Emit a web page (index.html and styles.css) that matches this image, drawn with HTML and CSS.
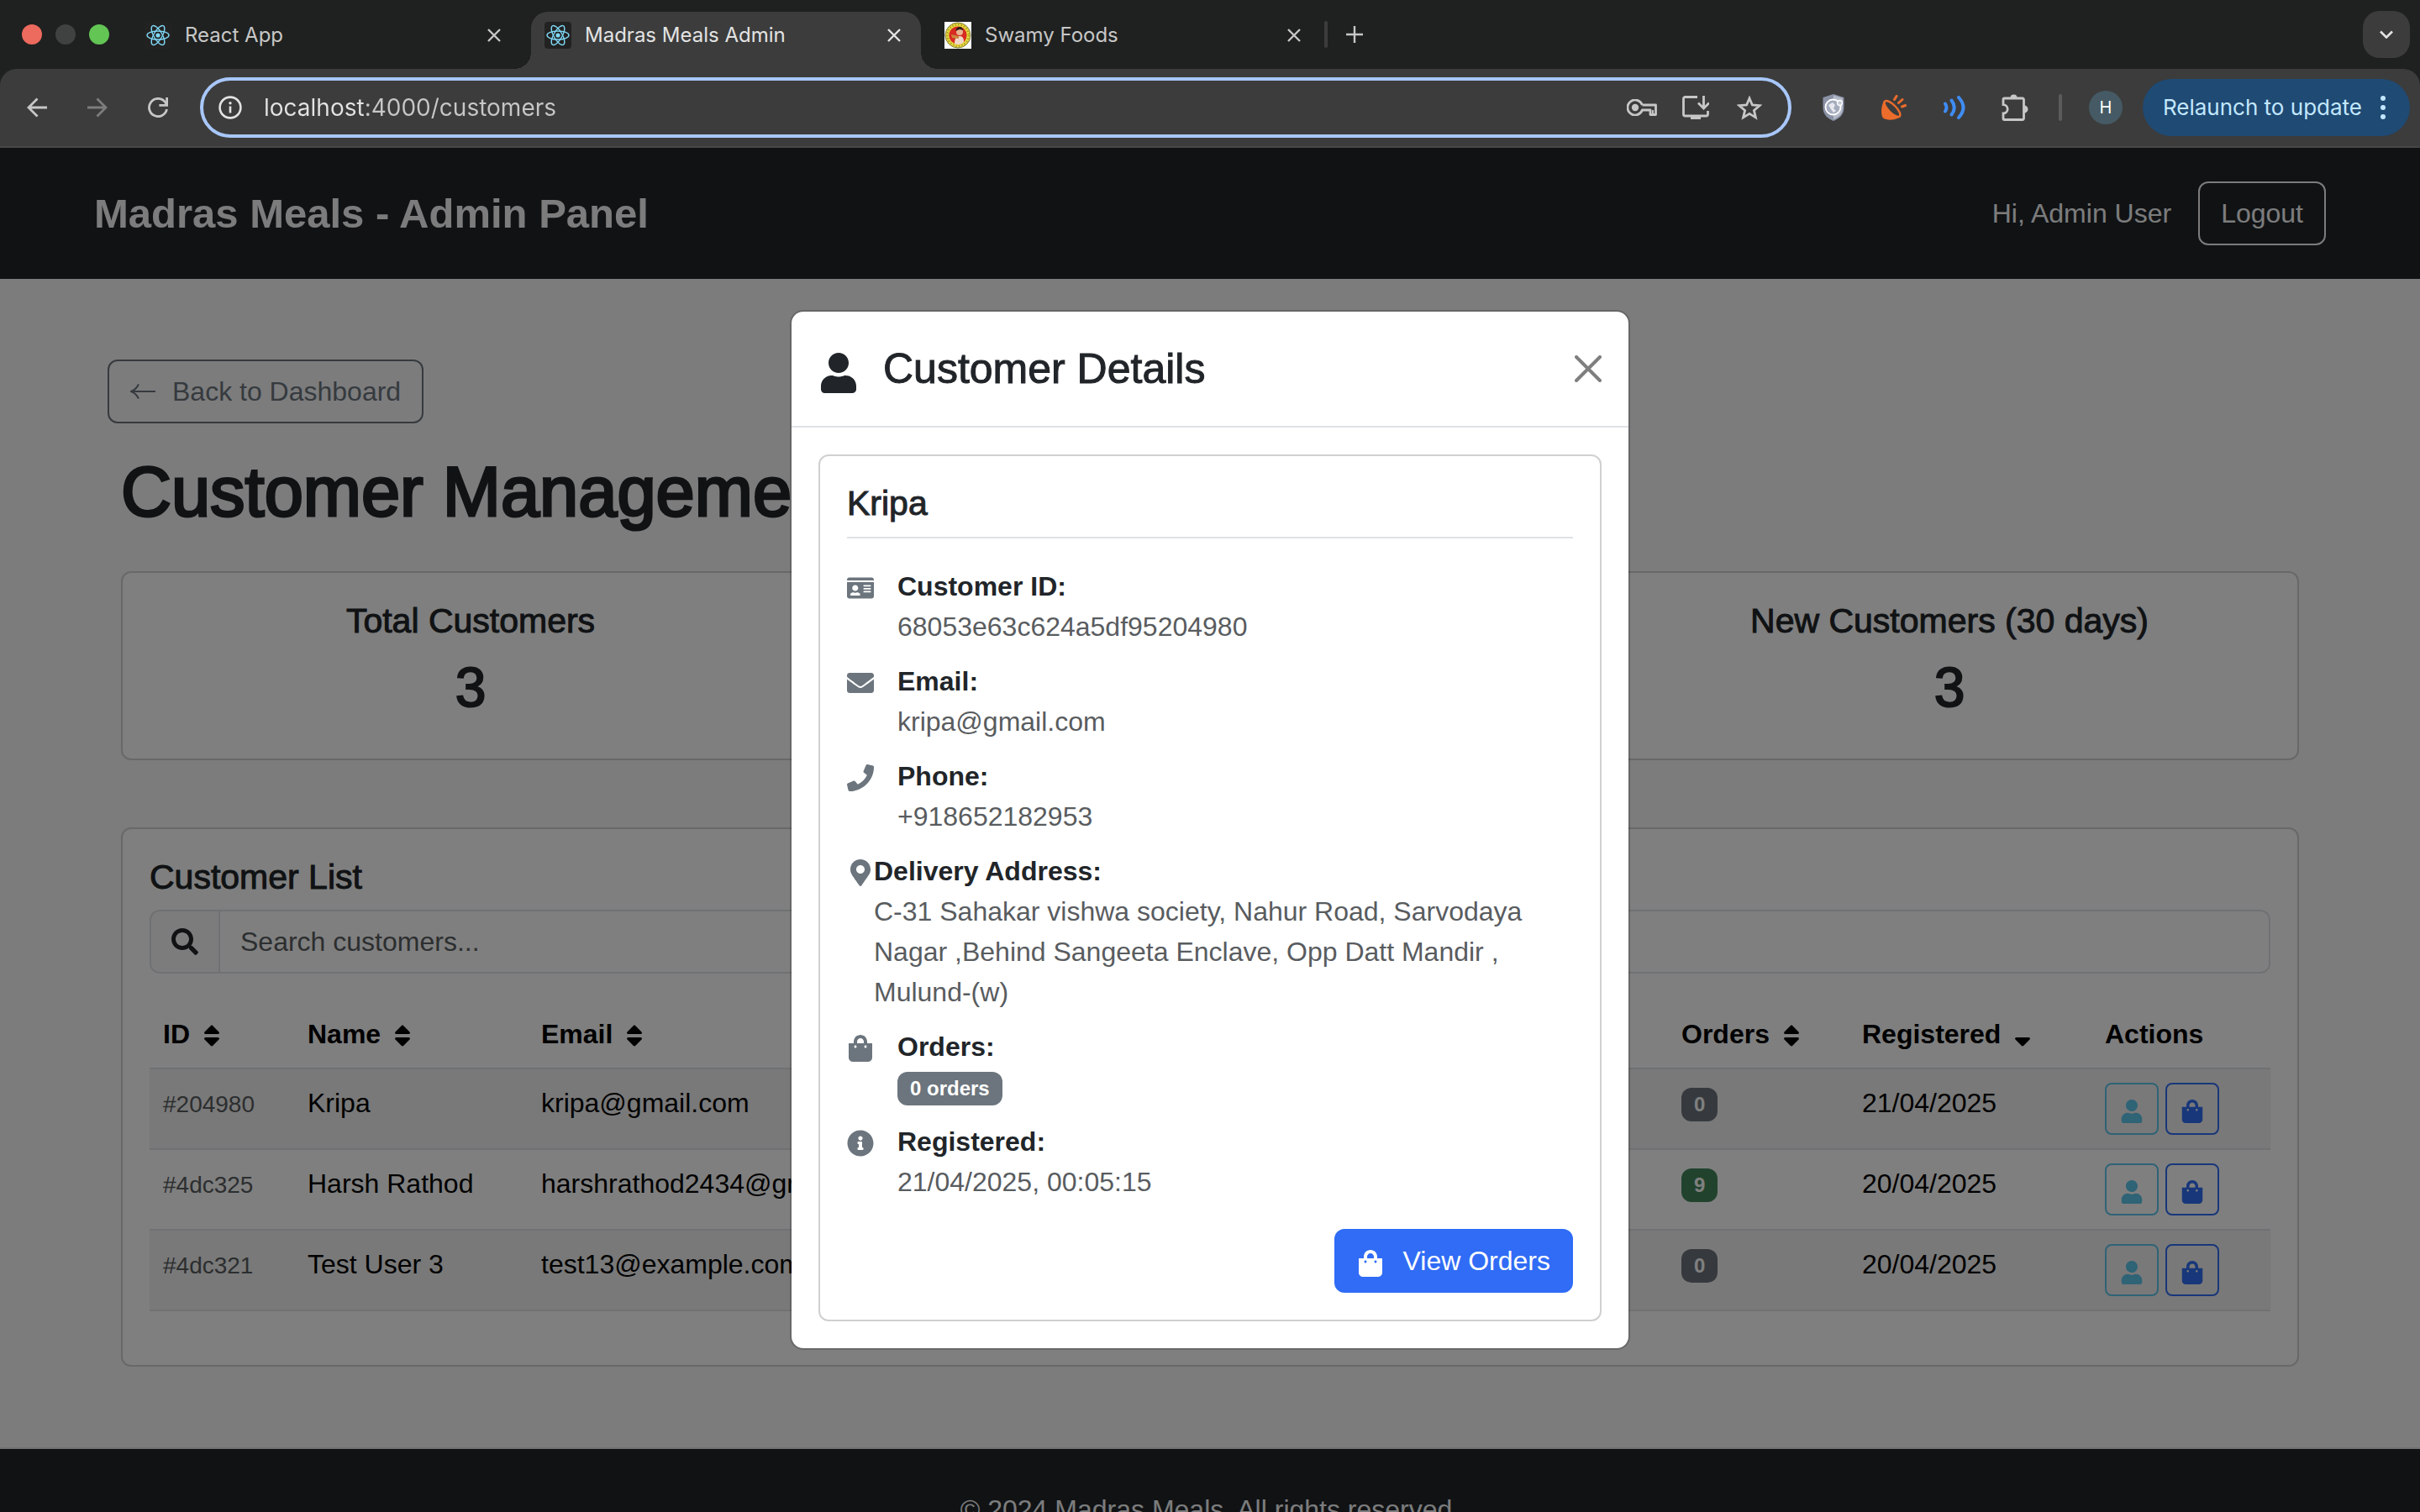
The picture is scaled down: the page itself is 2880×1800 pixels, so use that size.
FILE: index.html
```html
<!DOCTYPE html>
<html lang="en">
<head>
<meta charset="utf-8">
<title>Madras Meals Admin</title>
<link rel="stylesheet" href="styles.css">
</head>
<body>
<svg class="sprite" aria-hidden="true">
  <symbol id="react" viewBox="0 0 32 32"><g fill="none" stroke="#7fd8f5" stroke-width="1.4"><ellipse cx="16" cy="16" rx="13" ry="5"/><ellipse cx="16" cy="16" rx="13" ry="5" transform="rotate(60 16 16)"/><ellipse cx="16" cy="16" rx="13" ry="5" transform="rotate(120 16 16)"/></g><circle cx="16" cy="16" r="2.6" fill="#7fd8f5"/></symbol>
  <symbol id="close" viewBox="0 0 16 16"><path d="M1 1l14 14M15 1L1 15" fill="none" stroke="currentColor" stroke-width="2.4"/></symbol>
  <symbol id="user" viewBox="0 0 448 512"><path fill="currentColor" d="M224 256c70.7 0 128-57.3 128-128S294.7 0 224 0 96 57.3 96 128s57.3 128 128 128zm89.6 32h-16.7c-22.2 10.2-46.9 16-72.9 16s-50.6-5.8-72.9-16h-16.7C60.2 288 0 348.2 0 422.4V464c0 26.5 21.5 48 48 48h352c26.5 0 48-21.5 48-48v-41.6c0-74.2-60.2-134.4-134.4-134.4z"/></symbol>
  <symbol id="bag" viewBox="0 0 448 512"><path fill="currentColor" d="M352 160v-32C352 57.42 294.579 0 224 0 153.42 0 96 57.42 96 128v32H0v272c0 44.183 35.817 80 80 80h288c44.183 0 80-35.817 80-80V160h-96zm-192-32c0-35.29 28.71-64 64-64s64 28.71 64 64v32H160v-32zm160 120c-13.255 0-24-10.745-24-24s10.745-24 24-24 24 10.745 24 24-10.745 24-24 24zm-192 0c-13.255 0-24-10.745-24-24s10.745-24 24-24 24 10.745 24 24-10.745 24-24 24z"/></symbol>
  <symbol id="sort" viewBox="0 0 320 512"><path fill="currentColor" d="M41 288h238c21.4 0 32.1 25.9 17 41L177 448c-9.4 9.4-24.6 9.4-33.9 0L24 329c-15.1-15.1-4.4-41 17-41zm255-105L177 64c-9.4-9.4-24.6-9.4-33.9 0L24 183c-15.1 15.1-4.4 41 17 41h238c21.4 0 32.1-25.9 17-41z"/></symbol>
  <symbol id="sort-down" viewBox="0 0 320 512"><path fill="currentColor" d="M41 288h238c21.4 0 32.1 25.9 17 41L177 448c-9.4 9.4-24.6 9.4-33.9 0L24 329c-15.1-15.1-4.4-41 17-41z"/></symbol>
</svg>

<header class="browser">
  <div class="tabstrip">
    <div class="lights"><span class="light red"></span><span class="light grey"></span><span class="light green"></span></div>
    <div class="tab"><svg class="favicon dark"><use href="#react"/></svg><span class="tab-title">React App</span><button class="tab-close" aria-label="Close tab"><svg><use href="#close"/></svg></button></div>
    <div class="tab active"><svg class="favicon dark"><use href="#react"/></svg><span class="tab-title">Madras Meals Admin</span><button class="tab-close" aria-label="Close tab"><svg><use href="#close"/></svg></button></div>
    <div class="tab"><svg class="favicon" viewBox="0 0 32 32"><rect width="32" height="32" fill="#fff"/><circle cx="16" cy="16" r="15" fill="#e8d93c" stroke="#77763a" stroke-width="1"/><circle cx="16" cy="16" r="12.7" fill="none" stroke="#a89b28" stroke-width="2" stroke-dasharray="1.5 2"/><circle cx="16" cy="16" r="10.6" fill="#d92a22"/><path d="M12 26c0-6 2-9 6-9s5 3 5 7c-3 3-7 4-11 2z" fill="#f0d8c8"/><path d="M8 15l9 2v3l-8-1z" fill="#c98a3c"/><circle cx="18" cy="12" r="4" fill="#e8b490"/><path d="M13.500 11c0-6 8-7 9-1l-4-1c-2 0-3 1-5 2z" fill="#2d1c17"/></svg><span class="tab-title">Swamy Foods</span><button class="tab-close" aria-label="Close tab"><svg><use href="#close"/></svg></button></div>
    <span class="strip-divider"></span>
    <button class="new-tab" aria-label="New tab"><svg viewBox="0 0 20 20"><path d="M10 0v20M0 10h20" stroke="currentColor" stroke-width="2.4"/></svg></button>
    <button class="tab-search" aria-label="Search tabs"><svg viewBox="0 0 16 10"><path d="M1 1.5l7 7 7-7" fill="none" stroke="currentColor" stroke-width="2.6"/></svg></button>
  </div>
  <div class="toolbar">
    <button class="tool" aria-label="Back"><svg width="24" height="24" viewBox="0 0 24 24"><path d="M24 12H2M12.500 1.500L2 12l10.500 10.500" fill="none" stroke="currentColor" stroke-width="2.8"/></svg></button>
    <button class="tool dim" aria-label="Forward"><svg width="24" height="24" viewBox="0 0 24 24"><path d="M0 12h22M11.500 1.500L22 12 11.500 22.500" fill="none" stroke="currentColor" stroke-width="2.8"/></svg></button>
    <button class="tool" aria-label="Reload"><svg width="24" height="24" viewBox="0 0 24 24"><path d="M22.500 14A10.600 10.600 0 1 1 20.500 5.500L22 8" fill="none" stroke="currentColor" stroke-width="2.8"/><path d="M22.600 0v9.400h-9.200" fill="none" stroke="currentColor" stroke-width="2.8"/></svg></button>
    <div class="omnibox">
      <svg class="info" viewBox="0 0 28 28"><circle cx="14" cy="14" r="12.400" fill="none" stroke="currentColor" stroke-width="2.600"/><path d="M14 12.500v8" stroke="currentColor" stroke-width="2.600"/><circle cx="14" cy="8.800" r="1.700" fill="currentColor"/></svg>
      <input class="url" type="text" aria-label="Address" value="localhost:4000/customers">
      <button class="omni-btn" aria-label="Passwords"><svg width="36" height="20" viewBox="0 0 36 20"><path d="M18.500 7H34.500V18.500H28V13H18.400A9 9 0 1 1 18.400 7" fill="none" stroke="currentColor" stroke-width="2.800" stroke-linejoin="round"/><path d="M31 13v4" stroke="currentColor" stroke-width="2"/><circle cx="10" cy="10" r="4.200" fill="currentColor"/></svg></button>
      <button class="omni-btn" aria-label="Install"><svg width="32" height="28" viewBox="0 0 32 28"><path d="M18 1.500H3.500a2 2 0 0 0-2 2V22a2 2 0 0 0 2 2h25a2 2 0 0 0 2-2V18" fill="none" stroke="currentColor" stroke-width="2.800"/><path d="M10 24h12v4H10z" fill="currentColor"/><path d="M25.500 0v14M19 8.500l6.500 6.500L32 8.500" fill="none" stroke="currentColor" stroke-width="2.800"/></svg></button>
      <button class="omni-btn" aria-label="Bookmark"><svg width="30" height="29" viewBox="0 0 30 29"><path d="M15 3l3.400 8 8.600.700-6.600 5.700 2 8.500L15 21.400 7.600 25.900l2-8.500L3 11.700l8.600-.700z" fill="none" stroke="currentColor" stroke-width="2.800"/></svg></button>
    </div>
    <button class="tool" aria-label="Shield extension"><svg width="26" height="32" viewBox="0 0 26 32"><path d="M13 0l12.500 4v12c0 8-5 13-12.500 16C5.500 29 .5 24 .5 16V4z" fill="#8b92a6"/><path d="M13 1.500L24 5v11c0 7-4 11.500-11 14.300z" fill="#b4bac8"/><circle cx="12.500" cy="15.500" r="9" fill="#a5acbd" stroke="#fff" stroke-width="1.800"/><path d="M7 13l5-3 3 3-2 4 3 3-3 2-3-4z" fill="#e7e9ef"/><circle cx="20.500" cy="10.500" r="3" fill="#c5cad6" stroke="#fff" stroke-width="1.300"/></svg></button>
    <button class="tool" aria-label="Connector extension"><svg width="30" height="30" viewBox="0 0 30 30"><path d="M3 7C-.5 14-1 23 2 27.500 7 31 17 30 23 26z" fill="#ec6c2c"/><ellipse cx="13" cy="16.500" rx="12.500" ry="4.600" transform="rotate(45 13 16.500)" fill="#3c3c3c" stroke="#ec6c2c" stroke-width="2.400"/><path d="M15.500 5.500L18 1.500M20.500 9.500l4.500-4M24.500 14l4-1.500" stroke="#ec6c2c" stroke-width="3" stroke-linecap="round"/></svg></button>
    <button class="tool" aria-label="Sound extension"><svg width="26" height="28" viewBox="0 0 26 28"><path d="M2 9.500q3 4.500 0 9M9.500 5.500q6.500 8.500 0 17M18 2q11 12 0 24" fill="none" stroke="#3f8cf4" stroke-width="4" stroke-linecap="round"/></svg></button>
    <button class="tool" aria-label="Extensions"><svg width="32" height="32" viewBox="0 0 32 32"><path d="M2 6.500a1.500 1.500 0 0 1 1.500-1.500H25a1.500 1.500 0 0 1 1.500 1.500V29a1.500 1.500 0 0 1-1.500 1.500H3.500A1.500 1.500 0 0 1 2 29v-6a5.200 5.200 0 0 0 0-10.400z" fill="none" stroke="currentColor" stroke-width="2.800"/><path d="M10.500 4.500a4 4 0 0 1 8 0zM27 13.500a4.500 4.500 0 0 1 0 9z" fill="currentColor"/></svg></button>
    <span class="tool-divider"></span>
    <button class="avatar">H</button>
    <button class="relaunch">Relaunch to update<svg width="6" height="28" viewBox="0 0 6 28"><circle cx="3" cy="3" r="3"/><circle cx="3" cy="14" r="3"/><circle cx="3" cy="25" r="3"/></svg></button>
  </div>
</header>

<div class="viewport">
  <nav class="navbar">
    <a class="brand" href="#">Madras Meals - Admin Panel</a>
    <span class="greeting">Hi, Admin User</span>
    <button class="btn btn-light">Logout</button>
  </nav>

  <main class="page">
    <a class="btn btn-back" href="#"><svg width="30" height="20" viewBox="0 0 30 20"><path d="M30 10H2M10 1.500C8 5.500 5 8.500 1 10c4 1.500 7 4.500 9 8.500" fill="none" stroke="currentColor" stroke-width="2"/></svg>Back to Dashboard</a>
    <div class="content">
      <h1 class="title">Customer Management</h1>
      <div class="stats">
        <section class="card stat"><h2 class="stat-label">Total Customers</h2><p class="stat-value">3</p></section>
        <section class="card stat"></section>
        <section class="card stat"><h2 class="stat-label">New Customers (30 days)</h2><p class="stat-value">3</p></section>
      </div>
      <section class="card list">
        <h2 class="list-title">Customer List</h2>
        <div class="search">
          <label class="search-icon" for="q" aria-label="Search"><svg width="32" height="32" viewBox="0 0 512 512"><path fill="currentColor" d="M505 442.700L405.300 343c-4.500-4.500-10.600-7-17-7H372c27.600-35.300 44-79.700 44-128C416 93.100 322.900 0 208 0S0 93.100 0 208s93.100 208 208 208c48.300 0 92.700-16.400 128-44v16.300c0 6.400 2.500 12.500 7 17l99.700 99.700c9.400 9.400 24.600 9.400 33.900 0l28.300-28.300c9.400-9.400 9.400-24.600.1-34zM208 336c-70.700 0-128-57.200-128-128 0-70.700 57.200-128 128-128 70.700 0 128 57.200 128 128 0 70.700-57.200 128-128 128z"/></svg></label>
          <input class="search-input" id="q" type="text" placeholder="Search customers...">
        </div>
        <table class="table">
          <colgroup><col class="c-id"><col class="c-name"><col class="c-email"><col class="c-orders"><col class="c-date"><col class="c-actions"></colgroup>
          <thead>
            <tr>
              <th>ID <svg class="sort"><use href="#sort"/></svg></th>
              <th>Name <svg class="sort"><use href="#sort"/></svg></th>
              <th>Email <svg class="sort"><use href="#sort"/></svg></th>
              <th>Orders <svg class="sort"><use href="#sort"/></svg></th>
              <th>Registered <svg class="sort"><use href="#sort-down"/></svg></th>
              <th>Actions</th>
            </tr>
          </thead>
          <tbody>
            <tr><td><small class="id">#204980</small></td><td>Kripa</td><td>kripa@gmail.com</td><td><span class="badge">0</span></td><td>21/04/2025</td>
              <td><div class="actions"><button class="act info-btn" aria-label="View customer"><svg><use href="#user"/></svg></button><button class="act bag-btn" aria-label="View orders"><svg><use href="#bag"/></svg></button></div></td></tr>
            <tr><td><small class="id">#4dc325</small></td><td>Harsh Rathod</td><td>harshrathod2434@gmail.com</td><td><span class="badge success">9</span></td><td>20/04/2025</td>
              <td><div class="actions"><button class="act info-btn" aria-label="View customer"><svg><use href="#user"/></svg></button><button class="act bag-btn" aria-label="View orders"><svg><use href="#bag"/></svg></button></div></td></tr>
            <tr><td><small class="id">#4dc321</small></td><td>Test User 3</td><td>test13@example.com</td><td><span class="badge">0</span></td><td>20/04/2025</td>
              <td><div class="actions"><button class="act info-btn" aria-label="View customer"><svg><use href="#user"/></svg></button><button class="act bag-btn" aria-label="View orders"><svg><use href="#bag"/></svg></button></div></td></tr>
          </tbody>
        </table>
      </section>
    </div>
  </main>

  <footer class="footer">© 2024 Madras Meals. All rights reserved.</footer>

  <div class="backdrop">
    <div class="modal" role="dialog" aria-labelledby="modal-title">
      <div class="modal-header">
        <svg class="modal-icon"><use href="#user"/></svg>
        <h2 class="modal-title" id="modal-title">Customer Details</h2>
        <button class="modal-close" aria-label="Close"><svg viewBox="0 0 32 32"><path d="M2 2l28 28M30 2L2 30" stroke="currentColor" stroke-width="4" stroke-linecap="round"/></svg></button>
      </div>
      <div class="modal-body">
        <div class="card details">
          <h3 class="details-name">Kripa</h3>
          <dl class="facts">
            <div class="fact"><svg class="fact-icon" viewBox="0 0 576 512"><path fill="currentColor" d="M528 32H48C21.500 32 0 53.500 0 80v16h576V80c0-26.500-21.500-48-48-48zM0 432c0 26.500 21.500 48 48 48h480c26.500 0 48-21.500 48-48V128H0v304zm352-232c0-4.400 3.600-8 8-8h144c4.400 0 8 3.600 8 8v16c0 4.400-3.600 8-8 8H360c-4.400 0-8-3.600-8-8v-16zm0 64c0-4.400 3.600-8 8-8h144c4.400 0 8 3.600 8 8v16c0 4.400-3.600 8-8 8H360c-4.400 0-8-3.600-8-8v-16zm0 64c0-4.400 3.600-8 8-8h144c4.400 0 8 3.600 8 8v16c0 4.400-3.600 8-8 8H360c-4.400 0-8-3.600-8-8v-16zM176 192c35.300 0 64 28.700 64 64s-28.700 64-64 64-64-28.700-64-64 28.700-64 64-64zM67.100 396.200C75.500 370.500 99.600 352 128 352h8.200c12.300 5.100 25.700 8 39.800 8s27.600-2.900 39.800-8h8.200c28.400 0 52.500 18.500 60.900 44.200 3.200 9.900-5.200 19.800-15.600 19.800H82.700c-10.400 0-18.800-10-15.600-19.800z"/></svg><dt>Customer ID:</dt><dd>68053e63c624a5df95204980</dd></div>
            <div class="fact"><svg class="fact-icon" viewBox="0 0 512 512"><path fill="currentColor" d="M502.300 190.800c3.900-3.100 9.700-.2 9.700 4.700V400c0 26.500-21.500 48-48 48H48c-26.500 0-48-21.500-48-48V195.600c0-5 5.700-7.800 9.700-4.700 22.400 17.400 52.100 39.500 154.100 113.600 21.100 15.400 56.700 47.800 92.200 47.600 35.700.3 72-32.800 92.300-47.600 102-74.100 131.600-96.300 154-113.700zM256 320c23.200.4 56.600-29.200 73.400-41.400 132.700-96.300 142.800-104.700 173.400-128.700 5.800-4.500 9.200-11.500 9.200-18.900v-19c0-26.500-21.500-48-48-48H48c-26.500 0-48 21.500-48 48v19c0 7.400 3.400 14.300 9.200 18.900 30.600 23.900 40.700 32.400 173.400 128.700 16.800 12.200 50.200 41.800 73.400 41.400z"/></svg><dt>Email:</dt><dd>kripa@gmail.com</dd></div>
            <div class="fact"><svg class="fact-icon" viewBox="0 0 512 512"><path fill="currentColor" d="M493.400 24.600l-104-24c-11.300-2.600-22.900 3.300-27.500 13.900l-48 112c-4.200 9.800-1.400 21.300 6.900 28l60.600 49.600c-36 76.700-98.900 140.500-177.200 177.200l-49.600-60.600c-6.800-8.300-18.200-11.100-28-6.900l-112 48C3.900 366.500-2 378.100.6 389.400l24 104C27.100 504.200 36.700 512 48 512c256.100 0 464-207.500 464-464 0-11.200-7.700-20.900-18.600-23.400z"/></svg><dt>Phone:</dt><dd>+918652182953</dd></div>
            <div class="fact address"><svg class="fact-icon" viewBox="0 0 384 512"><path fill="currentColor" d="M172.268 501.670C26.970 291.031 0 269.413 0 192 0 85.961 85.961 0 192 0s192 85.961 192 192c0 77.413-26.970 99.031-172.268 309.670-9.535 13.774-29.930 13.773-39.464 0zM192 272c44.183 0 80-35.817 80-80s-35.817-80-80-80-80 35.817-80 80 35.817 80 80 80z"/></svg><dt>Delivery Address:</dt><dd>C-31 Sahakar vishwa society, Nahur Road, Sarvodaya Nagar ,Behind Sangeeta Enclave, Opp Datt Mandir , Mulund-(w)</dd></div>
            <div class="fact"><svg class="fact-icon"><use href="#bag"/></svg><dt>Orders:</dt><dd><span class="badge">0 orders</span></dd></div>
            <div class="fact"><svg class="fact-icon" viewBox="0 0 512 512"><path fill="currentColor" d="M256 8C119.043 8 8 119.083 8 256c0 136.997 111.043 248 248 248s248-111.003 248-248C504 119.083 392.957 8 256 8zm0 110c23.196 0 42 18.804 42 42s-18.804 42-42 42-42-18.804-42-42 18.804-42 42-42zm56 254c0 6.627-5.373 12-12 12h-88c-6.627 0-12-5.373-12-12v-24c0-6.627 5.373-12 12-12h12v-64h-12c-6.627 0-12-5.373-12-12v-24c0-6.627 5.373-12 12-12h64c6.627 0 12 5.373 12 12v100h12c6.627 0 12 5.373 12 12v24z"/></svg><dt>Registered:</dt><dd>21/04/2025, 00:05:15</dd></div>
          </dl>
          <div class="details-actions"><button class="btn btn-primary"><svg><use href="#bag"/></svg>View Orders</button></div>
        </div>
      </div>
    </div>
  </div>
</div>
</body>
</html>
```
FILE: styles.css
```css
*, *::before, *::after { box-sizing: border-box; }
body {
  margin: 0;
  height: 100vh;
  display: flex;
  flex-direction: column;
  overflow: hidden;
  font-family: "Liberation Sans", Arial, sans-serif;
  font-size: 32px;
  line-height: 48px;
  color: #212529;
}
h1, h2, h3, p, dl, dd { margin: 0; }
button, input { font: inherit; color: inherit; }
button { padding: 0; border: 0; background: none; }
svg { display: block; flex: none; }
.sprite { display: none; }

/* Browser window */
.browser {
  flex: none;
  background: #1f2120;
  color: #c7c7c7;
  font-family: Inter, sans-serif;
  font-size: 24px;
  line-height: 32px;
}
.tabstrip { display: flex; align-items: center; height: 82px; padding: 0 12px 0 26px; }
.lights { display: flex; gap: 16px; margin-right: 26px; }
.light { width: 24px; height: 24px; border-radius: 50%; }
.red { background: #ed6a5e; }
.grey { background: #404241; }
.green { background: #62c554; }
.tab {
  position: relative;
  display: flex;
  align-items: center;
  gap: 16px;
  width: 464px;
  height: 68px;
  margin: 14px 12px 0 0;
  padding: 0 24px 12px 16px;
}
.tab.active { background: #3c3c3c; border-radius: 20px 20px 0 0; color: #e3e3e3; }
.tab.active::before, .tab.active::after {
  content: "";
  position: absolute;
  bottom: 0;
  width: 20px;
  height: 20px;
}
.tab.active::before { right: 100%; background: radial-gradient(circle at 0 0, transparent 20px, #3c3c3c 20px); }
.tab.active::after { left: 100%; background: radial-gradient(circle at 100% 0, transparent 20px, #3c3c3c 20px); }
.favicon { width: 32px; height: 32px; }
.dark { background: #222; border-radius: 4px; }
.tab-title { flex: 1; white-space: nowrap; }
.tab-close svg { width: 16px; height: 16px; }
.strip-divider { width: 4px; height: 32px; margin-left: -8px; border-radius: 2px; background: #3c3c3c; }
.new-tab { margin-left: 22px; }
.new-tab svg { width: 20px; height: 20px; }
.tab-search {
  display: grid;
  place-items: center;
  width: 56px;
  height: 56px;
  margin-left: auto;
  border-radius: 20px;
  background: #3c3c3c;
  color: #e3e3e3;
}
.tab-search svg { width: 16px; height: 10px; }
.toolbar {
  display: flex;
  align-items: center;
  height: 94px;
  padding: 0 12px 0 8px;
  border-bottom: 2px solid #474747;
  border-radius: 20px 20px 0 0;
  background: #3c3c3c;
}
.tool { display: grid; place-items: center; width: 72px; height: 68px; }
.dim { color: #7d7d7d; }
.omnibox {
  flex: 1;
  display: flex;
  align-items: center;
  height: 72px;
  margin: 0 14px;
  padding: 0 14px 0 18px;
  border: 4px solid #a8c7fa;
  border-radius: 36px;
}
.info { width: 28px; height: 28px; color: #e3e3e3; }
.url {
  flex: 1;
  min-width: 0;
  margin-left: 26px;
  padding: 0;
  border: 0;
  background: linear-gradient(90deg, #e3e3e3 122px, #c7c7c7 122px) text;
  -webkit-text-fill-color: transparent;
  outline: 0;
  font-size: 28px;
  line-height: 40px;
}
.omni-btn { display: grid; place-items: center; width: 64px; height: 56px; }
.tool-divider { width: 4px; height: 32px; margin: 0 32px 0 16px; border-radius: 2px; background: #5b5b5b; }
.avatar { width: 40px; height: 40px; border-radius: 50%; background: #455a64; color: #fff; font-size: 20px; }
.relaunch {
  display: flex;
  align-items: center;
  gap: 22px;
  height: 68px;
  margin-left: 24px;
  padding: 0 29px 0 24px;
  border-radius: 34px;
  background: #1f4a73;
  color: #c2e7ff;
  font-size: 26px;
  white-space: nowrap;
}
.relaunch svg { fill: #c2e7ff; }

/* Page */
.viewport { position: relative; flex: 1; min-height: 0; overflow: hidden; background: #f8f9fa; }
.btn {
  display: inline-flex;
  align-items: center;
  gap: 20px;
  height: 76px;
  padding: 0 25px;
  border: 2px solid;
  border-radius: 12px;
  text-decoration: none;
  white-space: nowrap;
}
.navbar {
  display: flex;
  align-items: center;
  gap: 32px;
  height: 156px;
  padding: 0 112px;
  background: #212529;
  color: #f8f9fa;
}
.brand { margin-right: auto; color: inherit; font-size: 49px; font-weight: 700; text-decoration: none; }
.page { padding: 96px 128px; }
.btn-back { color: #6c757d; }
.content { padding: 0 16px; }
.title, .stat-label, .stat-value, .list-title, .modal-title, .details-name {
  font-weight: 400;
  -webkit-text-stroke: 1px currentColor;
}
.title { margin: 34px 0 46px; font-size: 83px; line-height: 96px; -webkit-text-stroke-width: 3px; }
.stats { display: grid; grid-template-columns: repeat(3, 1fr); gap: 48px; }
.card { padding: 32px; border: 2px solid #d0d0d1; border-radius: 12px; background: #fff; }
.stat { min-height: 225px; text-align: center; }
.stat-label { margin-bottom: 16px; font-size: 41px; line-height: 50px; }
.stat-value { font-size: 66px; line-height: 77px; -webkit-text-stroke-width: 2px; }
.stat-value { margin-bottom: -2px; }
.list { margin-top: 80px; }
.list-title { margin-bottom: 14px; font-size: 41px; line-height: 50px; }
.search { display: flex; height: 76px; margin-bottom: 32px; }
.search-icon {
  display: grid;
  place-items: center;
  width: 82px;
  border: 2px solid #dee2e6;
  border-right: 0;
  border-radius: 12px 0 0 12px;
  background: #f8f9fa;
}
.search-input {
  flex: 1;
  padding: 0 24px;
  border: 2px solid #dee2e6;
  border-radius: 0 12px 12px 0;
  background: #fff;
}
.search-input::placeholder { color: #595c5f; opacity: 1; }
.table {
  width: 100%;
  margin-bottom: 32px;
  border-collapse: separate;
  border-spacing: 0;
  table-layout: fixed;
  color: #000;
}
.c-id { width: 172px; }
.c-name { width: 278px; }
.c-orders { width: 215px; }
.c-date { width: 289px; }
.c-actions { width: 213px; }
.table th, .table td {
  height: 96px;
  padding: 16px;
  border-bottom: 2px solid #dee2e6;
  text-align: left;
  vertical-align: top;
  white-space: nowrap;
}
.table th { height: 82px; }
.table tbody tr:nth-child(odd) { background: #f2f2f2; }
.sort { display: inline-block; width: 20px; height: 32px; margin-left: 7px; vertical-align: -7px; }
.id { font-size: 28px; color: #595c5f; }
.badge {
  display: inline-block;
  padding: 8px 15px;
  border-radius: 12px;
  background: #6c757d;
  color: #fff;
  font-size: 24px;
  font-weight: 700;
  line-height: 24px;
  vertical-align: 1px;
}
.success { background: #43875a; }
.actions { display: flex; gap: 8px; }
.act { display: grid; place-items: center; width: 64px; height: 62px; padding-top: 6px; border: 2px solid; border-radius: 8px; }
.act svg { width: 26px; height: 28px; }
.info-btn { color: #5ec6ec; }
.bag-btn { color: #306ef5; }
.footer { padding: 48px; border-top: 2px solid #dee2e6; background: #212529; color: #f8f9fa; text-align: center; }

/* Customer dialog */
.backdrop {
  position: absolute;
  inset: 0;
  display: flex;
  align-items: center;
  justify-content: center;
  background: rgba(0, 0, 0, 0.5);
}
.modal {
  width: 1000px;
  border: 2px solid rgba(0, 0, 0, 0.175);
  border-radius: 16px;
  background: #fff;
  background-clip: padding-box;
}
.modal-header { display: flex; align-items: center; padding: 32px; border-bottom: 2px solid #dee2e6; }
.modal-icon { width: 48px; height: 48px; margin: 10px 29px 0 0; }
.modal-title { font-size: 50px; line-height: 72px; }
.modal-close { margin-left: auto; color: #7f7f7f; }
.modal-close svg { width: 32px; height: 32px; }
.modal-body { padding: 32px; }
.details-name {
  margin-bottom: 33px;
  padding-bottom: 15px;
  border-bottom: 2px solid #dee2e6;
  font-size: 41px;
  line-height: 49px;
}
.facts { display: grid; gap: 17px; }
.fact { display: grid; grid-template-columns: 32px 1fr; column-gap: 28px; }
.address { column-gap: 0; }
.fact-icon { width: 32px; height: 32px; margin-top: 10px; color: #6c757d; }
.fact dt { font-weight: 700; }
.fact dd { grid-column: 2; color: #595c5f; }
.details-actions { display: flex; justify-content: flex-end; margin-top: 32px; }
.btn-primary { gap: 23px; border-color: #306cf5; background: #306cf5; color: #fff; }
.btn-primary svg { width: 32px; height: 32px; margin-top: 6px; }
```
